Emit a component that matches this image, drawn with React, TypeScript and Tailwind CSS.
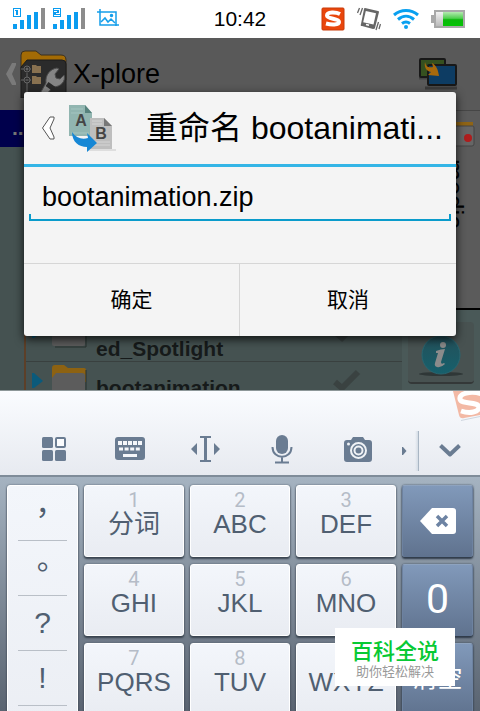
const keys = [
  { digit: "1", label: "分词" },
  { digit: "2", label: "ABC" },
  { digit: "3", label: "DEF" },
  { digit: "4", label: "GHI" },
  { digit: "5", label: "JKL" },
  { digit: "6", label: "MNO" },
  { digit: "7", label: "PQRS" },
  { digit: "8", label: "TUV" },
  { digit: "9", label: "WXYZ" },
];

const marks = ["，", "。", "?", "!"];

function Signal({ sim }: { sim: string }) {
  return (
    <svg width="34" height="22" viewBox="0 0 34 22" shapeRendering="crispEdges">
      <path d="M0 0h8v9H0z" fill="#0a9cf0" />
      <path d="M1 1h6v7H1z" fill="#fff" />
      {sim === "1" ? (
        <path d="M2 2h3v5H3V3H2z" fill="#0a9cf0" />
      ) : (
        <path d="M1 2h5v3H3v1h4v1H1V4h3V3H1z" fill="#0a9cf0" />
      )}
      <path d="M0 16h4v5H0zM7 12h4v9H7zM14 7h4v14h-4zM21 4h4v17h-4z" fill="#0a9cf0" />
      <path d="M28 0h4v21h-4z" fill="#8c8c8c" />
    </svg>
  );
}

function StatusBar() {
  return (
    <header className="relative flex h-[38px] shrink-0 items-center justify-between bg-white pl-[13px] pr-[15px]">
      <div className="flex items-center gap-[6px]">
        <Signal sim="1" />
        <Signal sim="2" />
        <svg width="22" height="20" viewBox="0 0 22 20" fill="none" stroke="#149eea" strokeWidth="1.5" className="ml-1">
          <path d="M0 3h19v14M3 0v16h19" />
          <path d="M4 13l4-4 3 4 3-3 4 4" />
          <circle cx="14.500" cy="6.500" r="1" fill="#149eea" />
        </svg>
      </div>
      <time className="absolute left-1/2 -translate-x-1/2 text-[21px] leading-6 text-black">10:42</time>
      <div className="flex items-center gap-3">
        <svg width="24" height="24" viewBox="0 0 24 24">
          <rect x="1" y="1" width="22" height="22" rx="1" fill="#e9460c" stroke="#c93a08" />
          <path d="M19 7C15 5 6 4.500 6 8.500c0 4 12 2.500 12 6.500 0 3.200-8 2.800-13 1.500" fill="none" stroke="#fff" strokeWidth="4" />
        </svg>
        <svg width="24" height="24" viewBox="0 0 24 24">
          <path d="M8 1l13 3q1 0 1 1l-4 16q0 1-2 1L5 19q-2 0-1-2L7 2q0-1 1-1z" fill="#666" />
          <path d="M8.800 4L19 6.300 16.500 17.500 6.200 15.200z" fill="#fff" />
          <path d="M9 17.500l3 .700" stroke="#fff" strokeWidth="1.500" />
          <path d="M2.500 1L.500 6M5.500 1L3 8M21.500 15L19 23M23.500 17l-1.500 5" fill="none" stroke="#666" strokeWidth="1.300" />
        </svg>
        <svg width="26" height="20" viewBox="0 0 26 20" fill="none" stroke="#09a0f0" strokeWidth="3">
          <path d="M1 6C8 0 18 0 25 6M5 10.500c5-4.300 11-4.300 16 0M9 14.500c3-2.300 5-2.300 8 0" />
          <circle cx="13" cy="18" r="2" fill="#09a0f0" stroke="none" />
        </svg>
        <svg width="34" height="18" viewBox="0 0 34 18">
          <defs>
            <linearGradient id="charge" x2="0" y2="1">
              <stop offset="0" stopColor="#b4e9b0" />
              <stop offset=".450" stopColor="#4fcf4f" />
              <stop offset=".550" stopColor="#0cb80c" />
              <stop offset="1" stopColor="#05c405" />
            </linearGradient>
            <linearGradient id="cell" x2="0" y2="1">
              <stop offset="0" stopColor="#f2f2f2" />
              <stop offset="1" stopColor="#bbb" />
            </linearGradient>
          </defs>
          <path d="M0 5h3V0h31v18H3v-5H0z" fill="#a9a9a9" />
          <path d="M5 2h27v14H5z" fill="url(#cell)" />
          <path d="M12 2h20v14H12z" fill="url(#charge)" />
        </svg>
      </div>
    </header>
  );
}

function Folder() {
  return (
    <svg width="35" height="34" viewBox="0 0 35 34">
      <path d="M0 4q0-3 3-3h9l4 3h16q2 0 2 2v12H0z" fill="#8d6212" />
      <path d="M0 14l4-5h26q3 0 3 3v18q0 2-2 2H2q-2 0-2-2z" fill="#5c5c5c" />
      <path d="M34 6v27H3" fill="none" stroke="#29302f" />
    </svg>
  );
}

function FileRow({ name, className }: { name: string; className: string }) {
  return (
    <li className={className}>
      <svg width="12" height="16" viewBox="0 0 12 16" className="shrink-0">
        <path d="M0 0h2l9 8-9 7H0z" fill="#0b5a7b" />
      </svg>
      <Folder />
      <span className="ml-px grow self-end text-[21px] leading-6 font-bold text-[#161a1a]">{name}</span>
      <svg width="30" height="24" viewBox="0 0 30 24" className="mr-10" fill="none" stroke="#3a4241" strokeWidth="6">
        <path d="M3 13l7 6L26 3" />
      </svg>
    </li>
  );
}

function Explorer() {
  return (
    <main className="flex h-full flex-col overflow-hidden bg-[#455251]">
      <div className="flex h-[72px] shrink-0 items-center bg-[#595959] pl-[6px] pr-[22px]">
        <svg width="11" height="22" viewBox="0 0 11 22">
          <path d="M6 0h4v2L6 11l4 9v2H6L0 11z" fill="#7a7a7a" />
        </svg>
        <svg width="50" height="48" viewBox="0 0 50 48" className="ml-[3px]">
          <path d="M1 5q0-4 4-4h11l5 4h20q5 0 5 5v20H1z" fill="#a36b05" stroke="#3a3020" />
          <path d="M1 17l6-7h35q4 0 4 4v34H1z" fill="#2b2b2b" stroke="#1c1c1c" />
          <path d="M12 15h4l1 1h4v7h-9zM12 26h4l1 1h4v7h-9z" fill="#887150" />
          <path d="M1 19h10M7 23v23M1 30h10" stroke="#666" />
          <circle cx="7" cy="19" r="3" fill="#2b2b2b" stroke="#666" />
          <circle cx="7" cy="30" r="3" fill="#2b2b2b" stroke="#666" />
          <path d="M7 17.500v3M5.500 19h3M5.500 30h3" stroke="#777" />
          <path d="M18 47l8-14c-1-8 4-14 11-15l2 1-4 5 1 4 4 1 4-4c2 6-3 12-11 12l-9 10z" fill="#858585" stroke="#4a4a4a" />
          <path d="M27 34l7 5" stroke="#2a2a2a" strokeWidth="5" />
        </svg>
        <h1 className="ml-[3px] grow text-[27px] leading-8 text-black">X-plore</h1>
        <svg width="40" height="32" viewBox="0 0 40 32">
          <path d="M1 20h24" stroke="#444" strokeWidth="3" />
          <rect x="2" y="1" width="25" height="18" rx="1" fill="#35501f" stroke="#181818" strokeWidth="2" />
          <rect x="10" y="7" width="28" height="20" rx="1" fill="#0d3c63" stroke="#181818" strokeWidth="2" />
          <path d="M7 30h32" stroke="#3b3b3b" strokeWidth="3" />
          <path d="M7 4c1 5 4 6 8 5l-1-4c4 2 6 6 7 13l-11-1 3-3C8 13 6 9 7 4z" fill="#a8690b" />
        </svg>
      </div>

      <div className="flex min-h-0 flex-1">
        <section className="min-w-0 flex-1">
          <div className="h-[37px] bg-[#00004c] pl-3 text-[21px] leading-9 font-bold text-[#777]">...</div>
          <ul className="ml-6 border-l-2 border-[#5c3f28] pt-[153px]">
            <FileRow name="ed_Spotlight" className="flex h-[62px] items-center gap-2 border-b border-[#39403f] pl-[6px]" />
            <FileRow name="bootanimation" className="flex h-[50px] items-center gap-2 pb-3 pl-[6px]" />
          </ul>
        </section>

        <aside className="flex w-[78px] flex-col bg-[#4a5958]">
          <div className="flex h-[200px] flex-col items-end border-t border-b-2 border-t-[#464646] border-b-black bg-[#5b5b5b] pr-[5px]">
            <svg width="34" height="26" viewBox="0 0 34 26" className="mt-[10px]">
              <path d="M0 1h32v8H0z" fill="#8f6415" />
              <path d="M0 5h32q1 0 1 2v16q0 2-2 2H0z" fill="#666" stroke="#444" />
              <circle cx="27" cy="17" r="4" fill="#ae1d1d" />
            </svg>
            <span className="mt-3 mr-[7px] text-[26px] leading-7 text-black [writing-mode:vertical-rl]">media</span>
          </div>
          <button aria-label="信息" className="mx-[6px] mt-3 flex h-[62px] items-center justify-center rounded-sm border-b-2 border-[#343838] bg-[#485251]">
            <svg width="46" height="50" viewBox="0 0 46 50">
              <defs>
                <linearGradient id="ball" x2="0" y2="1">
                  <stop offset="0" stopColor="#24505a" />
                  <stop offset="1" stopColor="#16606c" />
                </linearGradient>
              </defs>
              <ellipse cx="23" cy="47" rx="22" ry="2" fill="#2f3737" />
              <circle cx="23" cy="28" r="19" fill="url(#ball)" stroke="#286570" />
              <path d="M18 24q5-2 9-2l-4 13q0 3 3 1l1 1q-4 4-8 3-3-1-2-4l3-10h-2z" fill="#8b8b8b" />
              <circle cx="25" cy="18" r="3" fill="#8b8b8b" />
            </svg>
          </button>
        </aside>
      </div>
    </main>
  );
}

function RenameDialog() {
  return (
    <div className="absolute inset-0 flex items-center px-6">
      <form role="dialog" className="w-full rounded-[3px] bg-[#f4f4f4] shadow-[0_3px_10px_rgba(0,0,0,0.8)]">
        <div className="flex h-[75px] items-center border-b-3 border-[#34b5e6] pl-[17px]">
          <button type="button" aria-label="返回">
            <svg width="15" height="26" viewBox="0 0 15 26" fill="#fff" stroke="#555">
              <path d="M9 2h4v2L9 13l4 9v2H9L1.500 13z" />
            </svg>
          </button>
          <svg width="48" height="48" viewBox="0 0 48 48" className="ml-3">
            <path d="M1 1h16l7 8v23H1z" fill="#91b5b0" />
            <path d="M17 1v8h7z" fill="#56827d" />
            <path d="M3 5h12M3 9h12M3 29h18" stroke="#a4c5c0" />
            <path d="M20 46h28" stroke="#dedede" strokeWidth="2" />
            <path d="M22 14h14l8 8v23H22z" fill="#bebebe" />
            <path d="M36 14v8h8z" fill="#777" />
            <path d="M24 17h10M24 20h10M24 38h18M24 41h18" stroke="#d5d5d5" />
            <text x="13" y="22" textAnchor="middle" className="text-[16px] font-bold" fill="#454545">A</text>
            <text x="33" y="35" textAnchor="middle" className="text-[16px] font-bold" fill="#454545">B</text>
            <path d="M4 28c4 6 10 8 16 6l-1-5 10 10-10 9v-5C11 43 4 38 4 28z" fill="#1687d5" />
          </svg>
          <h2 className="ml-[30px] truncate text-[32px] leading-10 text-black">重命名 bootanimati...</h2>
        </div>
        <div className="h-24 px-[5px] pt-3">
          <div className="relative">
            <input
              aria-label="文件名"
              defaultValue="bootanimation.zip"
              className="block h-[42px] w-full border-b-2 border-[#0a9bcb] bg-transparent px-[13px] pb-1 text-[27px] text-black outline-none"
            />
            <span className="absolute bottom-0 left-0 h-[7px] w-[2px] bg-[#0a9bcb]" />
            <span className="absolute right-0 bottom-0 h-[7px] w-[2px] bg-[#0a9bcb]" />
          </div>
        </div>
        <div className="grid h-[73px] grid-cols-2 border-t border-[#d6d6d6] text-[21px] text-black">
          <button type="button" className="border-r border-[#d6d6d6]">确定</button>
          <button type="button">取消</button>
        </div>
      </form>
    </div>
  );
}

function ToolBar() {
  return (
    <div className="relative flex h-[87px] overflow-hidden border-t border-b-2 border-t-[#8d9799] border-b-[#7f8c99] bg-linear-to-b from-[#fafcff] to-[#e7eaf0] pl-4 text-[#6a7c92]">
      <div className="flex flex-1 pt-8">
        <button aria-label="面板" className="flex flex-1 items-center justify-center">
          <svg width="24" height="24" viewBox="0 0 24 24" fill="currentColor">
            <rect width="11" height="11" rx="1.500" />
            <rect y="13" width="11" height="11" rx="1.500" />
            <rect x="13" y="13" width="11" height="11" rx="1.500" />
            <rect x="14" y="1" width="9" height="9" rx="1" fill="#fbfcfe" stroke="currentColor" strokeWidth="2" />
          </svg>
        </button>
        <button aria-label="键盘" className="flex flex-1 items-center justify-center">
          <svg width="30" height="24" viewBox="0 0 30 24">
            <rect width="30" height="23" rx="3" fill="currentColor" />
            <path d="M3 6h25" stroke="#f4f6fa" strokeWidth="4" strokeDasharray="4 1" />
            <path d="M4 12h21" stroke="#f4f6fa" strokeWidth="3" strokeDasharray="4 1.600" />
            <path d="M8 18.500h14" stroke="#f4f6fa" strokeWidth="3" />
          </svg>
        </button>
        <button aria-label="光标" className="flex flex-1 items-center justify-center">
          <svg width="30" height="26" viewBox="0 0 30 26" fill="currentColor">
            <path d="M9 0h11v2h-4v22h4v2H9v-2h4V2H9zM6 7v12l-6-6zM23 7v12l6-6z" />
          </svg>
        </button>
        <button aria-label="语音" className="flex flex-1 items-center justify-center">
          <svg width="22" height="29" viewBox="0 0 22 29" fill="none" stroke="currentColor" strokeWidth="2">
            <rect x="5" y="0" width="12" height="19" rx="6" fill="currentColor" stroke="none" />
            <path d="M1.500 12c0 13 19 13 19 0M11 22v5M4 27.500h14" />
          </svg>
        </button>
        <button aria-label="拍照" className="flex flex-1 items-center justify-center">
          <svg width="28" height="25" viewBox="0 0 28 25">
            <path d="M3 3h4l2-3h10l2 3h4q3 0 3 3v16q0 3-3 3H3q-3 0-3-3V6q0-3 3-3z" fill="currentColor" />
            <g fill="none" stroke="#eff2f6" strokeWidth="2">
              <circle cx="14.500" cy="13.500" r="7.500" />
              <circle cx="14.500" cy="13.500" r="4" />
            </g>
            <circle cx="4.500" cy="7" r="1.500" fill="#eff2f6" />
          </svg>
        </button>
      </div>
      <div className="flex w-[23px] items-center pt-9 pl-[6px]">
        <svg width="5" height="8" viewBox="0 0 5 8" fill="currentColor">
          <path d="M0 0h1l3.500 4L1 8H0z" />
        </svg>
      </div>
      <div className="mt-10 mb-1 -ml-1 w-1 border-r border-[#a9b6c4] bg-linear-to-r from-transparent to-[#d4dce5]" />
      <button aria-label="收起" className="flex w-[61px] items-center justify-center pt-9">
        <svg width="22" height="16" viewBox="0 0 22 16" fill="none" stroke="currentColor" strokeWidth="4">
          <path d="M1.500 2.500l9.500 9 9.500-9" strokeLinejoin="round" />
        </svg>
      </button>
      <svg width="27" height="30" viewBox="0 0 27 30" className="absolute top-0 right-0">
        <path d="M0 0h27v24L11 27q-4 1-5-3z" fill="#f3b9a5" />
        <path d="M8 29.500l19-4" stroke="#cfd6df" />
        <path d="M29 3C17-1 6 3 7 8c1 6 18 2 19 8 0 5-9 7-18 4" fill="none" stroke="#fff" strokeWidth="5" />
      </svg>
    </div>
  );
}

const lightKey =
  "rounded-[3px] border border-white bg-linear-to-b from-[#f3f6fb] to-[#e9ecf2] shadow-[0_2px_2px_#39434f,0_0_2px_#4c5867]";
const darkKey =
  "flex items-center justify-center rounded-[3px] border border-[#8ea3bf] border-x-[#6d82a0] border-b-[#5f7390] bg-linear-to-b from-[#8199ba] to-[#60738f] text-white shadow-[0_2px_2px_#2f3a49,0_0_2px_#344256]";

function KeyPad() {
  return (
    <div className="grid h-[234px] grid-cols-[5fr_22fr_5fr] gap-[6px] overflow-hidden bg-linear-to-b from-[#a5b3c1] to-[#5a6471] px-[7px] pt-2 text-[#505f71]">
      <div className={`h-[310px] px-[10px] font-['Liberation_Sans','Noto_Sans_CJK_TC',sans-serif] text-[30px] ${lightKey}`}>
        {marks.map((mark) => (
          <button key={mark} lang="zh-TW" className="block h-[55px] w-full border-b border-[#b9bfc7] text-center leading-[54px]">
            {mark}
          </button>
        ))}
      </div>
      <div className="grid auto-rows-[72px] grid-cols-3 gap-x-[6px] gap-y-[7px]">
        {keys.map((key) => (
          <button key={key.digit} className={`flex flex-col items-center pt-1 ${lightKey}`}>
            <span className="font-[Roboto] text-[20px] leading-5 text-[#b5bcc7]">{key.digit}</span>
            <span className="text-[26px] leading-7">{key.label}</span>
          </button>
        ))}
      </div>
      <div className="grid auto-rows-[72px] gap-y-[7px]">
        <button aria-label="删除" className={darkKey}>
          <svg width="36" height="26" viewBox="0 0 36 26">
            <path d="M12 0h21q3 0 3 3v20q0 3-3 3H12L0 13z" fill="#fff" />
            <path d="M17 8l10 10M27 8L17 18" stroke="#6d83a3" strokeWidth="3.500" />
          </svg>
        </button>
        <button className={`font-[Roboto] text-[41px] ${darkKey}`}>0</button>
        <button className={`text-[25px] ${darkKey}`}>清空</button>
      </div>
    </div>
  );
}

export default function App() {
  return (
    <div className="relative flex h-screen flex-col overflow-hidden font-['Liberation_Sans','Noto_Sans_CJK_SC',sans-serif]">
      <StatusBar />
      <div className="relative min-h-0 flex-1">
        <Explorer />
        <RenameDialog />
      </div>
      <div className="shrink-0">
        <ToolBar />
        <KeyPad />
      </div>
      <div className="absolute right-[25px] bottom-[25px] flex h-[58px] w-[120px] flex-col items-center bg-white pt-[10px]">
        <strong className="text-[22px] leading-7 font-medium text-[#08c934]">百科全说</strong>
        <span className="text-[13px] leading-3 text-[#999]">助你轻松解决</span>
      </div>
    </div>
  );
}
